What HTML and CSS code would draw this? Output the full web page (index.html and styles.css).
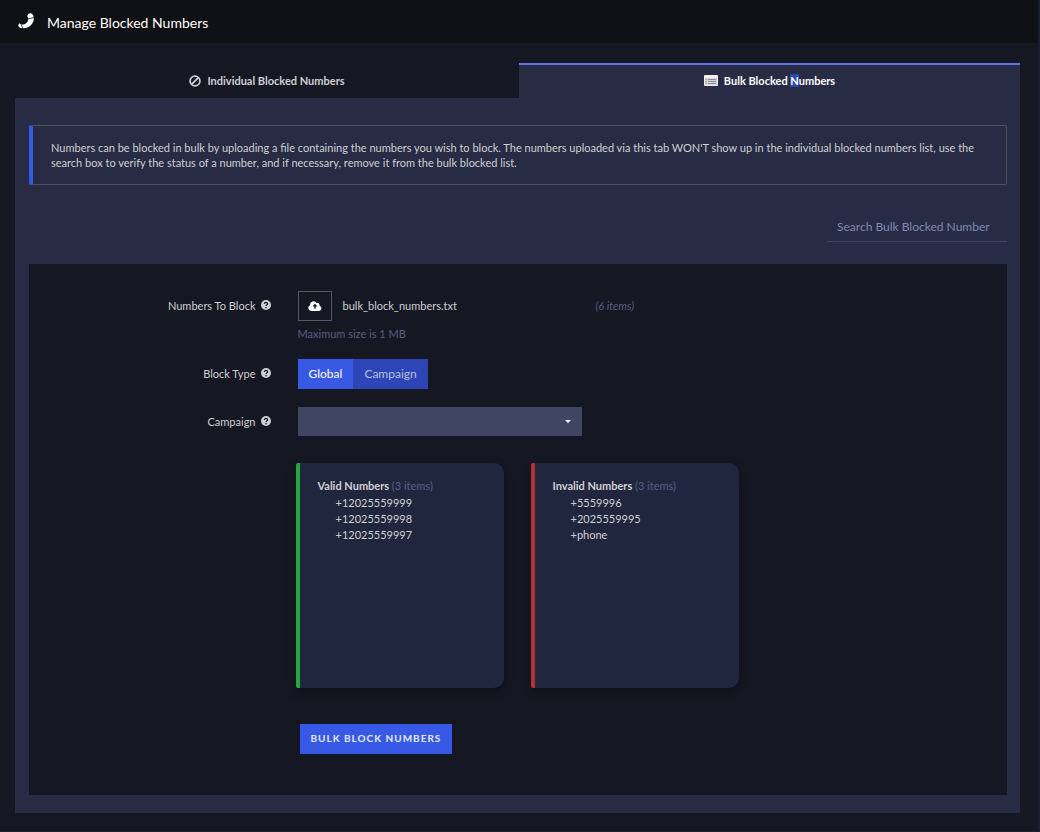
FILE: index.html
```html
<!DOCTYPE html>
<html lang="en">
<head>
    <meta charset="UTF-8">
    <meta name="viewport" content="width=device-width, initial-scale=1">
    <title>Manage Blocked Numbers</title>
    <link rel="stylesheet" href="styles.css">
</head>
<body>
    <header class="header">
        <svg class="header-icon" viewBox="0 0 16 16" width="16" height="16" aria-hidden="true">
            <path fill="#fff" d="M15.800 5C16.200 10.500 11 15.800 5 15.300L3.500 11.600C7.500 11.800 10.300 9 10.100 6.200z"/>
            <path fill="#fff" d="M9.300 3.200Q9.500.3 12.500.3 15 .6 15.700 4.200L10.300 5.400z"/>
            <path fill="#fff" d="M.3 12.600Q.4 11 1.700 10.300L2.900 11.500 4.200 15.200Q1 15.300.3 12.600z"/>
        </svg>
        <h1>Manage Blocked Numbers</h1>
    </header>

    <main class="content">
        <div class="tabs" role="tablist">
            <button class="tab" type="button" role="tab" aria-selected="false">
                <svg viewBox="0 0 12 12" width="12" height="12" aria-hidden="true">
                    <circle cx="6" cy="6" r="4.900" fill="none" stroke="currentColor" stroke-width="1.800"/>
                    <path d="M2.600 9.400l6.800-6.800" stroke="currentColor" stroke-width="1.800"/>
                </svg>
                <span>Individual Blocked Numbers</span>
            </button>
            <button class="tab active" type="button" role="tab" aria-selected="true">
                <svg viewBox="0 0 14 12" width="14" height="12" aria-hidden="true">
                    <rect width="14" height="11" rx="1" fill="#f6f0ea"/>
                    <rect x="1" y="3" width="12" height="7" fill="#d4d4de"/>
                    <path d="M1 4.500h2M1 6.500h2M1 8.500h2" stroke="#c9a595"/>
                    <path d="M4 4.500h8M4 6.500h8M4 8.500h8" stroke="#8c8c9e"/>
                </svg>
                <span>Bulk Blocked <span class="selected">N</span>umbers</span>
            </button>
        </div>

        <section class="panel">
            <p class="info">Numbers can be blocked in bulk by uploading a file containing the numbers you wish to block. The numbers uploaded via this tab WON'T show up in the individual blocked numbers list, use the search box to verify the status of a number, and if necessary, remove it from the bulk blocked list.</p>

            <div class="search">
                <input type="text" placeholder="Search Bulk Blocked Number" aria-label="Search Bulk Blocked Number">
            </div>

            <form class="bulk-form">
                <div class="row">
                    <label class="row-label" for="uploadButton">Numbers To Block
                        <svg class="help" viewBox="0 0 10 10" width="10" height="10" aria-hidden="true"><circle cx="5" cy="5" r="5" fill="currentColor"/><path d="M3.300 3.900Q3.500 2.400 5 2.400t1.600 1.400Q6.600 4.500 5.700 5 5 5.300 5 6M5 6.900v1.300" fill="none" stroke="#151722" stroke-width="1.300"/></svg>
                    </label>
                    <div class="file">
                        <button class="upload" id="uploadButton" type="button" aria-label="Upload file">
                            <svg viewBox="0 0 14 10" width="14" height="10" aria-hidden="true"><path fill="#fff" d="M3.200 10A3 3 0 0 1 2 4.300 3.600 3.600 0 0 1 8.600 2 2.200 2.200 0 0 1 11.500 4.700 2.700 2.700 0 0 1 11 10z"/><path fill="#151722" d="M7 2.800l2.500 2.700H7.700v2.300H6.300V5.500H4.500z"/></svg>
                        </button>
                        <span class="file-name">bulk_block_numbers.txt</span>
                        <em class="file-count">(6 items)</em>
                        <small class="hint">Maximum size is 1 MB</small>
                    </div>
                </div>

                <div class="row">
                    <span class="row-label" id="blockType">Block Type
                        <svg class="help" viewBox="0 0 10 10" width="10" height="10" aria-hidden="true"><circle cx="5" cy="5" r="5" fill="currentColor"/><path d="M3.300 3.900Q3.500 2.400 5 2.400t1.600 1.400Q6.600 4.500 5.700 5 5 5.300 5 6M5 6.900v1.300" fill="none" stroke="#151722" stroke-width="1.300"/></svg>
                    </span>
                    <div class="toggle" role="group" aria-labelledby="blockType">
                        <button class="on" type="button" aria-pressed="true">Global</button>
                        <button type="button" aria-pressed="false">Campaign</button>
                    </div>
                </div>

                <div class="row">
                    <label class="row-label" for="campaign">Campaign
                        <svg class="help" viewBox="0 0 10 10" width="10" height="10" aria-hidden="true"><circle cx="5" cy="5" r="5" fill="currentColor"/><path d="M3.300 3.900Q3.500 2.400 5 2.400t1.600 1.400Q6.600 4.500 5.700 5 5 5.300 5 6M5 6.900v1.300" fill="none" stroke="#151722" stroke-width="1.300"/></svg>
                    </label>
                    <div class="select">
                        <select id="campaign"><option></option></select>
                        <span class="caret"></span>
                    </div>
                </div>

                <div class="row results">
                    <div class="cards">
                        <div class="card valid">
                            <h2>Valid Numbers <span>(3 items)</span></h2>
                            <ul>
                                <li>+12025559999</li>
                                <li>+12025559998</li>
                                <li>+12025559997</li>
                            </ul>
                        </div>
                        <div class="card invalid">
                            <h2>Invalid Numbers <span>(3 items)</span></h2>
                            <ul>
                                <li>+5559996</li>
                                <li>+2025559995</li>
                                <li>+phone</li>
                            </ul>
                        </div>
                    </div>
                </div>

                <div class="row">
                    <div class="actions">
                        <button class="submit" type="button">BULK BLOCK NUMBERS</button>
                    </div>
                </div>
            </form>
        </section>
    </main>
</body>
</html>
```
FILE: styles.css
```css
* {
    box-sizing: border-box;
}

body {
    margin: 0;
    min-height: 100vh;
    font-family: Lato, sans-serif;
    font-size: 11px;
    line-height: 15px;
    color: #d0d0d2;
    background: #151722;
    border-right: 2px solid #1b1e30;
    border-bottom: 1px solid #1b1e30;
}

button,
input,
select {
    font: inherit;
    color: inherit;
    border: none;
    border-radius: 0;
    margin: 0;
}

button {
    cursor: pointer;
}

.header {
    display: flex;
    align-items: center;
    gap: 13px;
    height: 43px;
    padding: 0 18px;
    background: #101114;
}

.header-icon {
    margin-bottom: 2px;
}

.header h1 {
    margin: 0;
    padding-top: 2px;
    font-size: 14px;
    font-weight: normal;
    color: #fff;
}

.content {
    padding: 20px 18px 18px 15px;
}

.tabs {
    display: grid;
    grid-template-columns: 504fr 501fr;
}

.tab {
    display: flex;
    align-items: center;
    justify-content: center;
    gap: 6px;
    height: 35px;
    padding: 0 0 2px;
    font-weight: bold;
    background: none;
    border-top: 2px solid transparent;
}

.tab.active {
    color: #fff;
    background: #272b44;
    border-top-color: #5b74e8;
}

.selected {
    background: #2b47b5;
}

.panel {
    padding: 27px 13px 18px 14px;
    background: #272b44;
}

.info {
    margin: 0;
    padding: 14px 18px;
    border: 1px solid #4e515d;
    border-left: 4px solid #3858e6;
    border-radius: 2px;
}

.search {
    display: flex;
    justify-content: flex-end;
    margin: 27px 0 22px;
}

.search input {
    width: 180px;
    height: 30px;
    padding: 0 10px;
    font-size: 12px;
    background: none;
    border-bottom: 1px solid #3f4768;
}

.search input::placeholder {
    color: #8089b5;
    opacity: 1;
}

.bulk-form {
    padding: 27px 0 41px;
    background: #151722;
}

.row {
    display: grid;
    grid-template-columns: 25% 1fr;
    column-gap: 24px;
    margin-bottom: 18px;
}

.row > :last-child {
    grid-column: 2;
}

.row:last-child {
    margin-bottom: 0;
}

.row-label {
    display: flex;
    align-items: center;
    justify-content: flex-end;
    gap: 5px;
    height: 28px;
    padding-right: 3px;
}

.file {
    display: grid;
    grid-template-columns: 34px 242px 1fr;
    column-gap: 11px;
    align-items: center;
}

.upload {
    display: flex;
    align-items: center;
    justify-content: center;
    height: 30px;
    padding: 0;
    background: none;
    border: 1px solid #555869;
}

.file-name,
.file-count {
    padding-bottom: 2px;
}

.file-count,
.hint,
.card h2 span {
    color: #565f84;
}

.hint {
    grid-column: 1 / -1;
    margin-top: 5px;
    font-size: 11px;
}

.toggle {
    display: flex;
}

.toggle button {
    height: 30px;
    padding: 0 11px 2px;
    font-size: 12px;
    color: #b9c0e0;
    background: #2d45b6;
}

.toggle .on {
    color: #fff;
    background: #3858e6;
}

.select {
    position: relative;
    max-width: 284px;
}

.select select {
    display: block;
    width: 100%;
    height: 29px;
    padding: 0 24px 0 10px;
    background: #404564;
    appearance: none;
}

.caret {
    position: absolute;
    top: 13px;
    right: 11px;
    border: 3px solid transparent;
    border-top-color: #fff;
    border-bottom: none;
    pointer-events: none;
}

.results {
    margin: 27px 0 36px;
}

.cards {
    display: flex;
    flex-wrap: wrap;
    gap: 27px;
    margin-left: -2px;
}

.card {
    width: 208px;
    min-height: 225px;
    padding: 15px 18px;
    background: #21263f;
    border-left: 4px solid #26a641;
    border-radius: 2px 10px 10px 2px;
    box-shadow: 0 4px 10px rgba(0, 0, 0, 0.3);
}

.card.invalid {
    border-left-color: #b03434;
}

.card h2 {
    margin: 0 0 2px;
    font-size: 11px;
}

.card h2 span {
    font-weight: normal;
}

.card ul {
    margin: 0;
    padding: 0 18px;
    line-height: 16px;
    list-style: none;
}

.actions {
    padding-left: 2px;
}

.submit {
    height: 30px;
    padding: 0 11px 2px;
    font-size: 10px;
    font-weight: bold;
    letter-spacing: 1px;
    color: #e6eaff;
    background: #3858e6;
}
```
